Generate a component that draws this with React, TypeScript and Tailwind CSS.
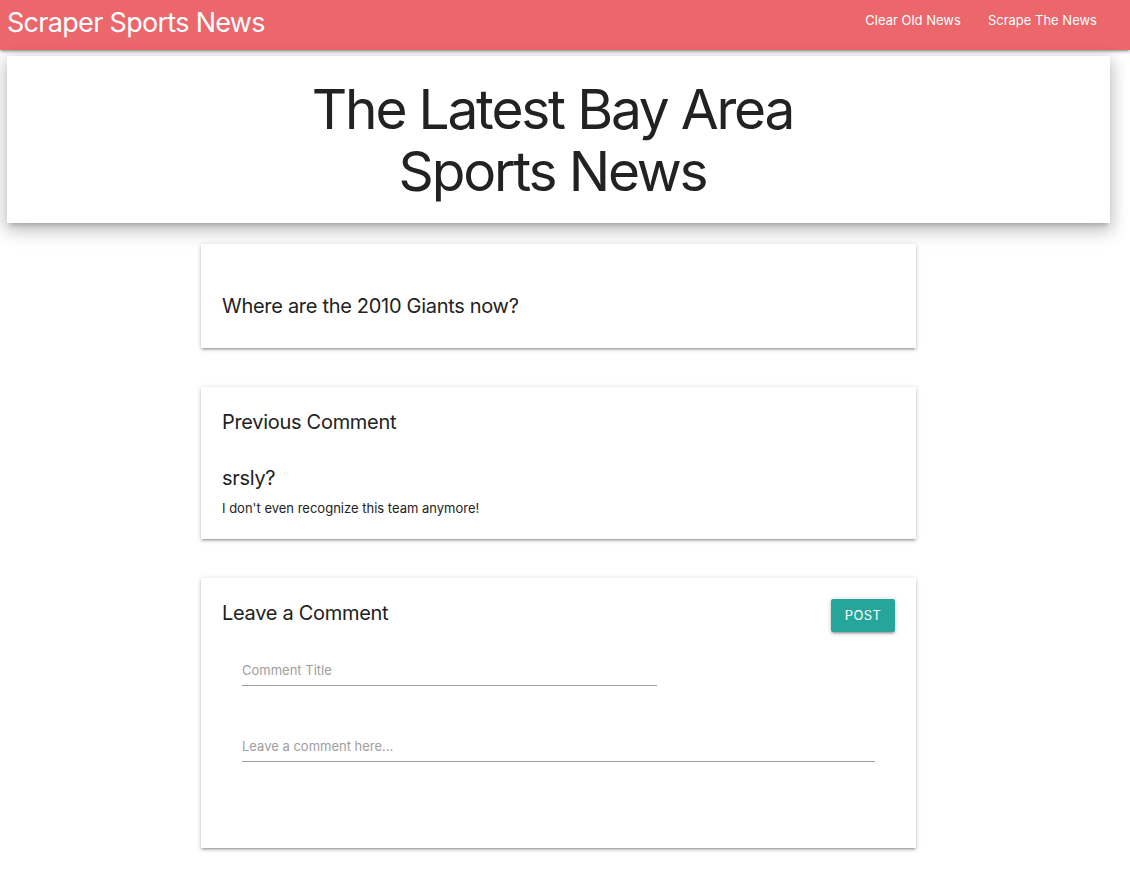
export default function App() {
  return (
    <div className="min-h-screen w-[1130px] bg-white font-['Inter','Roboto',sans-serif] text-[#222]">
      {/* Navbar */}
      <nav className="h-[50px] w-full bg-[#ec676c] shadow-[0_2px_2px_0_rgba(0,0,0,0.14),0_3px_1px_-2px_rgba(0,0,0,0.12),0_1px_5px_0_rgba(0,0,0,0.2)]">
        <div className="flex h-full w-[1117px] items-center justify-between pl-[7px] pr-[20px]">
          <a className="pb-[6px] text-[27px] leading-none tracking-[-0.7px] text-white">Scraper Sports News</a>
          <ul className="flex gap-[27px] pb-[9px] text-[13px] text-white">
            <li>Clear Old News</li>
            <li>Scrape The News</li>
          </ul>
        </div>
      </nav>

      <div className="flex w-[1117px] flex-col items-center">
        {/* Jumbotron */}
        <div className="mt-[6px] flex h-[167px] w-[1103px] items-center justify-center bg-white shadow-[0_8px_17px_2px_rgba(0,0,0,0.14),0_3px_14px_2px_rgba(0,0,0,0.12),0_5px_5px_-3px_rgba(0,0,0,0.2)]">
          <h1 className="pr-[12px] text-center text-[55px] leading-[62px] tracking-[-2.2px] text-[#222]">
            The Latest Bay Area
            <br />
            Sports News
          </h1>
        </div>

        {/* Article card */}
        <div className="mt-[21px] w-[715px] bg-white px-[21px] pt-[48px] pb-[28px] shadow-[0_2px_2px_0_rgba(0,0,0,0.14),0_3px_1px_-2px_rgba(0,0,0,0.12),0_1px_5px_0_rgba(0,0,0,0.2)]">
          <p className="text-[20px] leading-[28px] tracking-[-0.3px]">Where are the 2010 Giants now?</p>
        </div>

        {/* Previous comment */}
        <div className="mt-[39px] w-[715px] bg-white px-[21px] pt-[21px] pb-[21px] shadow-[0_2px_2px_0_rgba(0,0,0,0.14),0_3px_1px_-2px_rgba(0,0,0,0.12),0_1px_5px_0_rgba(0,0,0,0.2)]">
          <p className="text-[20px] leading-[28px] tracking-[-0.3px]">Previous Comment</p>
          <p className="mt-[28px] text-[20px] leading-[28px] tracking-[-0.3px]">srsly?</p>
          <p className="mt-[6px] text-[13px] leading-[20px]">I don't even recognize this team anymore!</p>
        </div>

        {/* Leave a comment */}
        <div className="mt-[39px] w-[715px] bg-white px-[21px] pt-[21px] pb-[86px] shadow-[0_2px_2px_0_rgba(0,0,0,0.14),0_3px_1px_-2px_rgba(0,0,0,0.12),0_1px_5px_0_rgba(0,0,0,0.2)]">
          <div className="flex items-start justify-between">
            <p className="text-[20px] leading-[28px] tracking-[-0.3px]">Leave a Comment</p>
            <button className="h-[33px] w-[64px] rounded-[2px] bg-[#26a69a] text-[13px] tracking-[0.4px] text-white uppercase shadow-[0_2px_2px_0_rgba(0,0,0,0.14),0_3px_1px_-2px_rgba(0,0,0,0.12),0_1px_5px_0_rgba(0,0,0,0.2)]">
              Post
            </button>
          </div>
          <input
            className="mt-[23px] ml-[20px] block h-[31px] w-[415px] border-b border-[#9e9e9e] bg-transparent text-[13px] outline-none placeholder:text-[#9e9e9e]"
            placeholder="Comment Title"
          />
          <input
            className="mt-[45px] ml-[20px] block h-[31px] w-[633px] border-b border-[#9e9e9e] bg-transparent text-[13px] outline-none placeholder:text-[#9e9e9e]"
            placeholder="Leave a comment here..."
          />
        </div>
        <div className="h-[24px]" />
      </div>
    </div>
  );
}
